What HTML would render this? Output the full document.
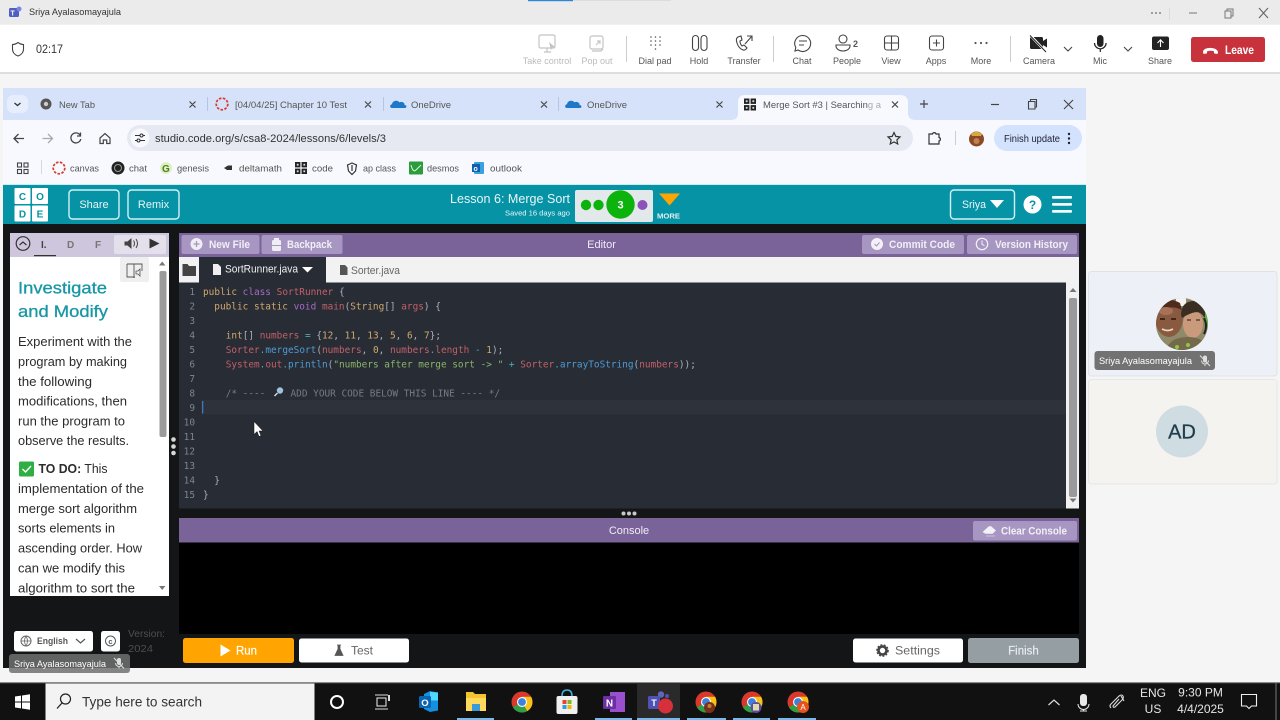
<!DOCTYPE html>
<html lang="en"><head><meta charset="utf-8"><title>Teams screen share</title>
<style>
html,body{margin:0;padding:0;background:#f5f5f5;overflow:hidden;width:1280px;height:720px}
svg{display:block;filter:blur(.35px)}
text{font-family:"Liberation Sans",sans-serif;white-space:pre}
.l{font-size:9px;fill:#555;text-anchor:middle}
.d{font-size:9px;fill:#bbb;text-anchor:middle}
.i{fill:none;stroke:#444;stroke-width:1.1}
.tb{font-size:9.5px;fill:#555}
.bk{font-size:9.5px;fill:#555}
.x{fill:none;stroke:#444;stroke-width:1.2}
.body{font-size:12.6px;fill:#2b2b2b}
.hb{font-size:11px;font-weight:bold;fill:#fff;fill-opacity:.85}
.code text{font-family:"DejaVu Sans Mono","Liberation Mono",monospace;font-size:9.42px;fill:#abb2bf}
.ln text{font-family:"DejaVu Sans Mono","Liberation Mono",monospace;font-size:9.42px;fill:#7d8590;text-anchor:end}
.k{fill:#cfa970}.p{fill:#a56bc4}.r{fill:#c2606a}.b{fill:#4f9bd6}.t{fill:#4fa8b5}.g{fill:#8cb56a}.n{fill:#cfa970}
.code text.c{fill:#767c86}
.tray{font-size:12px;fill:#e6e6e6;text-anchor:middle}
</style></head><body>
<svg width="1280" height="720" viewBox="0 0 1280 720" xmlns="http://www.w3.org/2000/svg">
<defs>
<g id="chrome"><circle r="10.5" fill="#d8392b"/><path d="M0 0L-9.1 5.25A10.5 10.5 0 0 0 5.25 9.1Z" fill="#2f9e44"/><path d="M0 0L5.25 9.1A10.5 10.5 0 0 0 9.1 -5.25L0 -5.25Z" fill="#f7c21a"/><circle r="5" fill="#fff"/><circle r="3.9" fill="#3b82e0"/></g>
<g id="od"><path d="M-7 4C-9.5 4-9.5 .5-7 .2C-6.5-3.5-1.5-4.5 .5-1.6C3-3 6-1 5.5 1C8 1 8 4 6 4Z" fill="#1d78c9"/></g>
<g id="codeic"><rect x="-6" y="-6" width="5.4" height="5.4" fill="#222"/><rect x=".6" y="-6" width="5.4" height="5.4" fill="#222"/><rect x="-6" y=".6" width="5.4" height="5.4" fill="#222"/><rect x=".6" y=".6" width="5.4" height="5.4" fill="#222"/><rect x="-4.2" y="-4.2" width="1.8" height="1.8" fill="#ddd"/><rect x="2.4" y="-4.2" width="1.8" height="1.8" fill="#ddd"/><rect x="-4.2" y="2.4" width="1.8" height="1.8" fill="#ddd"/><rect x="2.4" y="2.4" width="1.8" height="1.8" fill="#ddd"/></g>
<g id="canvas"><circle r="5.8" fill="none" stroke="#d5392c" stroke-width="1.7" stroke-dasharray="2.6 1.4"/></g>
<g id="micx"><rect x="-2" y="-5" width="4" height="7" rx="2" fill="#ddd"/><path d="M-3.5 0A3.5 3.5 0 0 0 3.5 0M0 3.5V5.5" fill="none" stroke="#ddd"/><path d="M-5-5L5 5.5" stroke="#ddd" stroke-width="1.1"/></g>
</defs>

<!-- desktop bg -->
<rect width="1280" height="720" fill="#f5f5f5"/>
<!-- teams title bar -->
<rect width="1280" height="24.5" fill="#ebebeb"/>
<rect x="528" width="45" height="1.2" fill="#2b88d8"/><rect x="573" width="98" height="1" fill="#dcdcdc"/>
<rect x="9" y="8" width="10" height="9" rx="1.5" fill="#4e5fbf"/><circle cx="19" cy="9" r="2.5" fill="#7b83eb"/><text x="10.5" y="15.5" font-size="7" font-weight="bold" fill="#fff">T</text>
<text x="29" y="15" font-size="9.5" fill="#333" textLength="92" lengthAdjust="spacingAndGlyphs">Sriya Ayalasomayajula</text>
<g fill="#666"><circle cx="1152" cy="13" r=".9"/><circle cx="1156" cy="13" r=".9"/><circle cx="1160" cy="13" r=".9"/></g>
<rect x="1169" y="8" width="1" height="12" fill="#ddd"/>
<path d="M1189 13H1197" stroke="#777"/><path d="M1225 11h6v7h-6zM1227 11v-2h6v7h-2" fill="none" stroke="#777"/><path d="M1259 8L1268 18M1268 8L1259 18" stroke="#666" stroke-width="1.1"/>

<!-- teams toolbar -->
<rect y="25" width="1280" height="47" fill="#fff"/>
<rect y="72" width="1280" height="2" fill="#dedede"/>
<path d="M18 42.500c2 1.500 3.500 2 5.500 2v4.500c0 3.500-2.500 6-5.500 7c-3-1-5.500-3.500-5.500-7v-4.500c2 0 3.500-.5 5.500-2z" fill="none" stroke="#444" stroke-width="1.1"/>
<text x="36" y="53" font-size="11.5" fill="#333" textLength="27" lengthAdjust="spacingAndGlyphs">02:17</text>

<g fill="none" stroke="#c4c4c4" stroke-width="1.2"><rect x="539" y="35" width="16" height="13" rx="1.500"/><path d="M544 52h7M547 48v4"/><rect x="590" y="36" width="13" height="13" rx="2"/><path d="M592 51h9l2-2M596 45l4-4M597 41h3v3"/></g><path d="M549 42l6 5-3 .5-1 3z" fill="#c4c4c4"/>
<text class="d" x="547" y="64">Take control</text><text class="d" x="597" y="64">Pop out</text>
<rect x="626" y="36" width="1" height="26" fill="#ccc"/>
<g fill="#555"><circle cx="651" cy="37" r=".8"/><circle cx="655.500" cy="37" r=".8"/><circle cx="660" cy="37" r=".8"/><circle cx="651" cy="41" r=".8"/><circle cx="655.500" cy="41" r=".8"/><circle cx="660" cy="41" r=".8"/><circle cx="651" cy="45" r=".8"/><circle cx="655.500" cy="45" r=".8"/><circle cx="660" cy="45" r=".8"/><circle cx="655.500" cy="49" r=".8"/></g>
<text class="l" x="655" y="64">Dial pad</text>
<g class="i"><rect x="692.500" y="35.500" width="6" height="15" rx="3"/><rect x="701" y="35.500" width="6" height="15" rx="3"/></g>
<text class="l" x="699" y="64">Hold</text>
<path class="i" d="M738 37c-2 1-2 3-1 6c1 3 3 6 6 7c2 .5 3-.5 4-2l-3-3l-2 1c-1-1-2-3-2-5l2-1l-1-4z"/><path class="i" d="M745 44l7-8M747 36h5v5"/>
<text class="l" x="744" y="64">Transfer</text>
<rect x="773" y="36" width="1" height="26" fill="#ccc"/>
<path class="i" d="M803 35.500a8 8 0 1 1-5 14.500l-3 1 .8-3.500a8 8 0 0 1 7.200-12zM799 41h8M799 45h5"/>
<text class="l" x="802" y="64">Chat</text>
<g class="i"><circle cx="843" cy="39" r="4"/><path d="M836 45h14v1a7 5 0 0 1-14 0z"/></g><text x="853" y="47" font-size="9" font-weight="bold" fill="#555">2</text>
<text class="l" x="847" y="64">People</text>
<g class="i"><rect x="884.500" y="36" width="14" height="14" rx="2.500"/><path d="M891.500 36v14M884.500 43h14"/></g>
<text class="l" x="891" y="64">View</text>
<g class="i"><rect x="929.500" y="36" width="14" height="14" rx="2.500"/><path d="M936.500 39.500v7M933 43h7"/></g>
<text class="l" x="936" y="64">Apps</text>
<g fill="#555"><circle cx="975.500" cy="43" r="1.100"/><circle cx="981" cy="43" r="1.100"/><circle cx="986.500" cy="43" r="1.100"/></g>
<text class="l" x="981" y="64">More</text>
<rect x="1010" y="36" width="1" height="26" fill="#ccc"/>
<rect x="1030" y="37" width="13" height="12" rx="1.500" fill="#222"/><path d="M1043 41l4-2.500v9l-4-2.500z" fill="#222"/><path d="M1030 35L1046 52" stroke="#fff" stroke-width="2.500"/><path d="M1030 35.500L1046 52" stroke="#222" stroke-width="1"/>
<text class="l" x="1039" y="64" fill="#333">Camera</text>
<path class="i" d="M1064 47l4 4 4-4M1124 47l4 4 4-4" stroke="#666"/>
<rect x="1097" y="35" width="6.500" height="12" rx="3.250" fill="#222"/><path d="M1094.500 43a5.800 5.800 0 0 0 11.600 0M1100.300 49v3" fill="none" stroke="#222" stroke-width="1.200"/>
<text class="l" x="1100" y="64">Mic</text>
<rect x="1152" y="36.500" width="17" height="13.500" rx="2" fill="#222"/><path d="M1160.500 47v-7M1157.500 43l3-3.200 3 3.200" stroke="#fff" fill="none" stroke-width="1.100"/>
<text class="l" x="1160" y="64">Share</text>
<rect x="1191" y="37" width="74" height="25" rx="2.500" fill="#c8323c"/>
<path d="M1203 52c0-5.500 14-5.500 15 0l-.5 2-3.500-.6v-2c-2.500-.9-4.500-.9-7 0v2l-3.500.6z" fill="#fff"/>
<text x="1225" y="54" font-size="11.500" font-weight="bold" fill="#fff" textLength="29" lengthAdjust="spacingAndGlyphs">Leave</text>

<!-- chrome window -->
<rect x="3" y="88" width="1083" height="32" fill="#d6e2f9"/>
<rect x="3" y="120" width="1083" height="64" fill="#f8f9ff"/>
<rect x="7" y="95" width="21" height="18" rx="6" fill="#e6edfc"/><path d="M14.500 103l3 2.500 3-2.500" fill="none" stroke="#333" stroke-width="1.300"/>
<circle cx="46" cy="104" r="5.500" fill="#555"/><circle cx="46" cy="104" r="2.200" fill="#ccc"/>
<text class="tb" x="59" y="108" textLength="36" lengthAdjust="spacingAndGlyphs">New Tab</text>
<path class="x" d="M189.500 101.500l6 6M195.500 101.500l-6 6M365 101.500l6 6M371 101.500l-6 6M541 101.500l6 6M547 101.500l-6 6M716.500 101.500l6 6M722.500 101.500l-6 6"/>
<rect x="207" y="97" width="1" height="14" fill="#b4c4e2"/><rect x="383" y="97" width="1" height="14" fill="#b4c4e2"/><rect x="558" y="97" width="1" height="14" fill="#b4c4e2"/>
<use href="#canvas" x="222" y="104"/>
<text class="tb" x="235" y="108" textLength="112" lengthAdjust="spacingAndGlyphs">[04/04/25] Chapter 10 Test</text>
<use href="#od" x="399" y="104"/><text class="tb" x="411" y="108" textLength="40" lengthAdjust="spacingAndGlyphs">OneDrive</text>
<use href="#od" x="574" y="104"/><text class="tb" x="587" y="108" textLength="40" lengthAdjust="spacingAndGlyphs">OneDrive</text>
<path d="M730 120c6 0 8-2 8-7v-11c0-5 3-7 7-7h155c4 0 8 2 8 7v11c0 5 3 7 8 7z" fill="#f8f9ff"/>
<use href="#codeic" x="750" y="104.500"/>
<text class="tb" x="763" y="108" textLength="118" lengthAdjust="spacingAndGlyphs" fill="#444">Merge Sort #3 | Searching a</text>
<rect x="868" y="96" width="14" height="16" fill="#f8f9ff" fill-opacity=".5"/>
<path d="M892 101.500l6 6M898 101.500l-6 6" class="x" stroke="#222"/>
<path d="M924 100v8M920 104h8" stroke="#444" stroke-width="1.200"/>
<path d="M991 104.500h8" stroke="#444" stroke-width="1.200"/>
<path d="M1028.500 101.500h6.500v7.500h-6.500zM1030.500 101.500v-2h6v7.500h-1.500" fill="none" stroke="#444" stroke-width="1.100"/>
<path d="M1064 100l9 9M1073 100l-9 9" stroke="#444" stroke-width="1.100"/>

<path d="M24 138.500H14.500M18.500 134l-4.500 4.500 4.500 4.500" fill="none" stroke="#444" stroke-width="1.300"/>
<path d="M42.500 138.500H52M48 134l4.500 4.500-4.500 4.500" fill="none" stroke="#aaa" stroke-width="1.300"/>
<path d="M80 135a5 5 0 1 0 .8 4M80.500 132.500v3.500H77" fill="none" stroke="#444" stroke-width="1.300"/>
<path d="M100 138l5-4.500 5 4.500v5.500h-3.300v-3.500h-3.400v3.500H100z" fill="none" stroke="#444" stroke-width="1.200"/>
<rect x="127" y="125" width="786" height="26" rx="13" fill="#e6e9f2"/>
<circle cx="140" cy="138" r="9.500" fill="#f8f9ff"/>
<path d="M135 135.500h5M143 135.500h2M135 140.500h2M140 140.500h5" stroke="#333"/><circle cx="141.500" cy="135.500" r="1.500" fill="none" stroke="#333"/><circle cx="138.500" cy="140.500" r="1.500" fill="none" stroke="#333"/>
<text x="155" y="142" font-size="11" fill="#333" textLength="231" lengthAdjust="spacingAndGlyphs">studio.code.org/s/csa8-2024/lessons/6/levels/3</text>
<path d="M894 132.500l1.800 3.900 4.200.5-3.100 2.900.8 4.200-3.700-2.100-3.700 2.100.8-4.200-3.100-2.900 4.200-.5z" fill="none" stroke="#333" stroke-width="1.200"/>
<path d="M929 134h3.500a1.800 1.800 0 0 1 3.500 0h3v3.500a1.800 1.800 0 0 1 0 3.500v3h-10z" fill="none" stroke="#333" stroke-width="1.200"/>
<rect x="955" y="131" width="1" height="14" fill="#ccd"/>
<circle cx="976.500" cy="139" r="7.500" fill="#8a4a28"/><path d="M971 134c3-3 8-3 11 0l-1 2h-9z" fill="#d8a840"/><circle cx="976.500" cy="141" r="3" fill="#c08050"/>
<rect x="994" y="125" width="88" height="26" rx="13" fill="#d3e3fd"/>
<text x="1004" y="142" font-size="10" fill="#223" textLength="56" lengthAdjust="spacingAndGlyphs">Finish update</text>
<g fill="#223"><circle cx="1069" cy="134" r="1.200"/><circle cx="1069" cy="138.500" r="1.200"/><circle cx="1069" cy="143" r="1.200"/></g>

<!-- bookmarks -->
<g fill="none" stroke="#444" stroke-width="1.100"><rect x="17.500" y="163" width="4" height="4"/><rect x="24" y="163" width="4" height="4"/><rect x="17.500" y="169.500" width="4" height="4"/><rect x="24" y="169.500" width="4" height="4"/></g>
<rect x="41" y="160" width="1" height="14" fill="#d4d8e4"/>
<use href="#canvas" x="59" y="168"/><text class="bk" x="70" y="171.500" textLength="29" lengthAdjust="spacingAndGlyphs">canvas</text>
<circle cx="118" cy="168" r="6.500" fill="#222"/><circle cx="118" cy="168" r="3.500" fill="none" stroke="#999"/><text class="bk" x="129" y="171.500" textLength="18" lengthAdjust="spacingAndGlyphs">chat</text>
<circle cx="166" cy="168" r="6" fill="#dff0c0"/><text x="162" y="172" font-size="10" font-weight="bold" fill="#4a7d2a">G</text><text class="bk" x="177" y="171.500" textLength="32" lengthAdjust="spacingAndGlyphs">genesis</text>
<path d="M224 168l4-2.500h4v4.500h-5z" fill="#333"/><text class="bk" x="239" y="171.500" textLength="43" lengthAdjust="spacingAndGlyphs">deltamath</text>
<use href="#codeic" x="301" y="168"/><text class="bk" x="312" y="171.500" textLength="21" lengthAdjust="spacingAndGlyphs">code</text>
<path d="M347.500 165l4.500-2 4.500 2-1 6-3.500 3.500-3.500-3.500zM352 165v6" fill="none" stroke="#333" stroke-width="1.200"/><text class="bk" x="363" y="171.500" textLength="33" lengthAdjust="spacingAndGlyphs">ap class</text>
<rect x="409" y="161.500" width="14" height="13" rx="1" fill="#2a9d3a"/><path d="M411 165q2 8 5 5t5-5" fill="none" stroke="#dff5df"/><text class="bk" x="427" y="171.500" textLength="32" lengthAdjust="spacingAndGlyphs">desmos</text>
<rect x="474" y="162" width="10" height="12" rx="1" fill="#3aa0e0"/><rect x="472" y="164" width="8" height="8" fill="#0f5fb0"/><text x="473.500" y="171" font-size="7" font-weight="bold" fill="#fff">o</text><text class="bk" x="490" y="171.500" textLength="32" lengthAdjust="spacingAndGlyphs">outlook</text>

<!-- code.org header -->
<rect x="3" y="184" width="1083" height="484" fill="#131517"/>
<rect x="3" y="184" width="1083" height="40" fill="#0793a6"/>
<rect x="3" y="184" width="1083" height="1" fill="#cfeaf0"/>
<g fill="#fff"><rect x="14.500" y="188" width="16" height="16" rx="1"/><rect x="32" y="188" width="16" height="16" rx="1"/><rect x="14.500" y="205.500" width="16" height="16" rx="1"/><rect x="32" y="205.500" width="16" height="16" rx="1"/></g>
<g font-size="10" font-weight="bold" fill="#0793a6" text-anchor="middle"><text x="22.500" y="200">C</text><text x="40" y="200">O</text><text x="22.500" y="217.500">D</text><text x="40" y="217.500">E</text></g>
<g fill="none" stroke="#d4f0f4" stroke-width="1.400"><rect x="69" y="190" width="50" height="29" rx="3.500"/><rect x="128" y="190" width="51" height="29" rx="3.500"/><rect x="950.500" y="190" width="64" height="29" rx="3.500"/></g>
<text x="94" y="208" font-size="11" fill="#e6f6f8" text-anchor="middle">Share</text><text x="153.500" y="208" font-size="11" fill="#e6f6f8" text-anchor="middle">Remix</text>
<text x="450" y="203" font-size="12.500" fill="#e8f6f8" textLength="120" lengthAdjust="spacingAndGlyphs">Lesson 6: Merge Sort</text>
<text x="505" y="215.500" font-size="7.500" fill="#e8f6f8" textLength="65" lengthAdjust="spacingAndGlyphs">Saved 16 days ago</text>
<rect x="575" y="190" width="78" height="32" rx="2" fill="#e3e8ea"/>
<circle cx="586" cy="205" r="5.200" fill="#0db30d"/><circle cx="598.500" cy="205" r="5.200" fill="#0db30d"/><circle cx="620.500" cy="204.500" r="14.200" fill="#0db30d"/><circle cx="642.500" cy="205" r="5" fill="#8c52ba"/>
<text x="620.500" y="208.500" font-size="11" font-weight="bold" fill="#fff" text-anchor="middle">3</text>
<path d="M659 193.500h21l-10.500 12z" fill="#ffa400"/>
<text x="657" y="218.500" font-size="7.500" font-weight="bold" fill="#dff2f5" textLength="23" lengthAdjust="spacingAndGlyphs">MORE</text>
<text x="962" y="208" font-size="11" fill="#e8f6f8" textLength="24" lengthAdjust="spacingAndGlyphs">Sriya</text>
<path d="M990 200h14l-7 8z" fill="#fff"/>
<circle cx="1032.500" cy="204.500" r="9" fill="#fff"/><text x="1032.500" y="209" font-size="12" font-weight="bold" fill="#0793a6" text-anchor="middle">?</text>
<g fill="#f4fbfc"><rect x="1052" y="196" width="20" height="2.800" rx="1"/><rect x="1052" y="203" width="20" height="2.800" rx="1"/><rect x="1052" y="210" width="20" height="2.800" rx="1"/></g>

<!-- instructions -->
<rect x="10" y="233" width="159" height="363" fill="#fff"/>
<rect x="10" y="233" width="159" height="24" fill="#cdc6dd"/>
<circle cx="23" cy="243.500" r="6.800" fill="none" stroke="#333" stroke-width="1.200"/><path d="M19.500 245l3.500-3 3.500 3" fill="none" stroke="#333" stroke-width="1.200"/>
<text x="41" y="248" font-size="10" font-weight="bold" fill="#444">I.</text><rect x="34" y="255" width="22" height="1.200" fill="#333"/>
<text x="67" y="248" font-size="10" font-weight="bold" fill="#777">D</text><text x="95" y="248" font-size="10" font-weight="bold" fill="#777">F</text>
<rect x="114" y="235" width="52" height="19" rx="2" fill="#e3dfeb"/>
<path d="M124.500 241.500h3l4-3.500v11l-4-3.500h-3z" fill="#444"/><path d="M133.500 240.500q2 3 0 6M136 239q3 4.500 0 9" fill="none" stroke="#444"/>
<path d="M149.500 238.500l10 5-10 5z" fill="#333"/>
<rect x="120" y="257" width="29" height="25" rx="2" fill="#efefef"/>
<path d="M127 264h15v7M127 264v13h8M134 264v14" fill="none" stroke="#555" stroke-width=".9"/><path d="M136 271h2l2-2v7l-2-2h-2z" fill="none" stroke="#555" stroke-width=".8"/>
<path d="M159 265.500l3.200-4 3.200 4z" fill="#777"/><rect x="159.500" y="271" width="7" height="166" rx="2" fill="#9b9b9b"/><path d="M159 586l3.200 4 3.200-4z" fill="#777"/>
<text x="18" y="293.500" font-size="16.500" fill="#1797a6" stroke="#1797a6" stroke-width=".3" textLength="89" lengthAdjust="spacingAndGlyphs">Investigate</text>
<text x="18" y="317" font-size="16.500" fill="#1797a6" stroke="#1797a6" stroke-width=".3" textLength="90" lengthAdjust="spacingAndGlyphs">and Modify</text>
<g class="body">
<text x="18" y="346" textLength="114" lengthAdjust="spacingAndGlyphs">Experiment with the</text>
<text x="18" y="366" textLength="109" lengthAdjust="spacingAndGlyphs">program by making</text>
<text x="18" y="386" textLength="74" lengthAdjust="spacingAndGlyphs">the following</text>
<text x="18" y="405.500" textLength="109" lengthAdjust="spacingAndGlyphs">modifications, then</text>
<text x="18" y="425.500" textLength="107" lengthAdjust="spacingAndGlyphs">run the program to</text>
<text x="18" y="445" textLength="111" lengthAdjust="spacingAndGlyphs">observe the results.</text>
<text x="38.500" y="473" textLength="69" lengthAdjust="spacingAndGlyphs"><tspan font-weight="bold">TO DO:</tspan> This</text>
<text x="18" y="493" textLength="126" lengthAdjust="spacingAndGlyphs">implementation of the</text>
<text x="18" y="513" textLength="119" lengthAdjust="spacingAndGlyphs">merge sort algorithm</text>
<text x="18" y="532.500" textLength="97" lengthAdjust="spacingAndGlyphs">sorts elements in</text>
<text x="18" y="552.500" textLength="124" lengthAdjust="spacingAndGlyphs">ascending order. How</text>
<text x="18" y="572.500" textLength="107" lengthAdjust="spacingAndGlyphs">can we modify this</text>
<text x="18" y="592.500" textLength="117" lengthAdjust="spacingAndGlyphs">algorithm to sort the</text>
</g>
<rect x="10" y="596" width="159" height="6" fill="#131517"/>
<rect x="19" y="461.500" width="15" height="15" rx="1.500" fill="#2fae44"/><path d="M22.500 469l3 3 5.500-6" fill="none" stroke="#fff" stroke-width="1.400"/>
<g fill="#d8d8d8"><circle cx="173.500" cy="439.500" r="2.300"/><circle cx="173.500" cy="446.500" r="2.300"/><circle cx="173.500" cy="453" r="2.300"/></g>

<!-- editor -->
<rect x="179" y="233" width="900" height="24" fill="#7a6399"/>
<g fill="#a795c2"><rect x="181.500" y="235" width="78" height="19" rx="2"/><rect x="261.500" y="235" width="81" height="19" rx="2"/><rect x="862" y="235" width="102" height="19" rx="2"/><rect x="967" y="235" width="110" height="19" rx="2"/></g>
<circle cx="196.500" cy="244" r="6" fill="#f0edf5"/><path d="M193.500 244h6M196.500 241v6" stroke="#a795c2" stroke-width="1.300"/>
<text class="hb" x="209" y="248" textLength="41" lengthAdjust="spacingAndGlyphs">New File</text>
<rect x="272" y="240" width="9" height="11" rx="1.500" fill="#f0edf5"/><rect x="274" y="238" width="5" height="2.500" fill="#f0edf5"/><rect x="272" y="245" width="9" height="1" fill="#a795c2"/>
<text class="hb" x="287" y="248" textLength="45" lengthAdjust="spacingAndGlyphs">Backpack</text>
<text x="601.500" y="248" font-size="11" fill="#efeaf5" text-anchor="middle">Editor</text>
<circle cx="877" cy="244" r="6" fill="#f3f1f7"/><path d="M874.500 244l2 2 3-3.500" fill="none" stroke="#a795c2" stroke-width="1.100"/>
<text class="hb" x="889" y="248" textLength="66" lengthAdjust="spacingAndGlyphs">Commit Code</text>
<circle cx="982" cy="244" r="5.700" fill="none" stroke="#f3f1f7" stroke-width="1.200"/><path d="M982 240.500v3.700l2.500 1.500" fill="none" stroke="#f3f1f7"/>
<text class="hb" x="995" y="248" textLength="73" lengthAdjust="spacingAndGlyphs">Version History</text>

<rect x="179" y="257" width="900" height="25.500" fill="#f2f2f2"/>
<rect x="199" y="257" width="127" height="25.500" fill="#282c34"/>
<path d="M182.500 264h5l1.500 2h7v10h-13.500z" fill="#444"/>
<path d="M213 264h5l3 3v8h-8z" fill="#eee"/>
<text x="225" y="272.500" font-size="11" fill="#f0f0f0" textLength="73" lengthAdjust="spacingAndGlyphs">SortRunner.java</text>
<path d="M302 267h11l-5.500 5.500z" fill="#fff"/>
<path d="M340 265h5l2.500 2.500v7.500h-7.500z" fill="#555"/>
<text x="351" y="274" font-size="11" fill="#666" textLength="49" lengthAdjust="spacingAndGlyphs">Sorter.java</text>

<rect x="179" y="282.500" width="887" height="226" fill="#282c34"/>
<rect x="1066" y="282.500" width="13" height="226" fill="#f1f1f1"/>
<path d="M1069.500 292l3.500-4 3.500 4z" fill="#777"/><rect x="1069" y="298" width="8" height="199" rx="2" fill="#9a9a9a"/><path d="M1069.500 498.500l3.500 4 3.500-4z" fill="#777"/>
<rect x="201" y="400" width="865" height="14.500" fill="#2d323b"/>
<rect x="202" y="401" width="1.300" height="12.500" fill="#3d79c4"/>

<g class="ln"><text x="195" y="294.800">1</text><text x="195" y="309.300">2</text><text x="195" y="323.800">3</text><text x="195" y="338.300">4</text><text x="195" y="352.800">5</text><text x="195" y="367.300">6</text><text x="195" y="381.800">7</text><text x="195" y="396.300">8</text><text x="195" y="410.800">9</text><text x="195" y="425.300">10</text><text x="195" y="439.800">11</text><text x="195" y="454.300">12</text><text x="195" y="468.800">13</text><text x="195" y="483.300">14</text><text x="195" y="497.800">15</text></g>
<g class="code">
<text x="203" y="294.800"><tspan class="k">public</tspan> <tspan class="p">class</tspan> <tspan class="r">SortRunner</tspan> {</text>
<text x="214.300" y="309.300"><tspan class="k">public</tspan> <tspan class="k">static</tspan> <tspan class="p">void</tspan> <tspan class="r">main</tspan>(<tspan class="k">String</tspan>[] <tspan class="r">args</tspan>) {</text>
<text x="225.700" y="338.300"><tspan class="k">int</tspan>[] <tspan class="r">numbers</tspan> <tspan class="t">=</tspan> {<tspan class="n">12</tspan>, <tspan class="n">11</tspan>, <tspan class="n">13</tspan>, <tspan class="n">5</tspan>, <tspan class="n">6</tspan>, <tspan class="n">7</tspan>};</text>
<text x="225.700" y="352.800"><tspan class="r">Sorter</tspan><tspan class="t">.</tspan><tspan class="b">mergeSort</tspan>(<tspan class="r">numbers</tspan>, <tspan class="n">0</tspan>, <tspan class="r">numbers</tspan><tspan class="t">.</tspan><tspan class="r">length</tspan> <tspan class="t">-</tspan> <tspan class="n">1</tspan>);</text>
<text x="225.700" y="367.300"><tspan class="r">System</tspan><tspan class="t">.</tspan><tspan class="r">out</tspan><tspan class="t">.</tspan><tspan class="b">println</tspan>(<tspan class="g">"numbers after merge sort -&gt; "</tspan> <tspan class="t">+</tspan> <tspan class="r">Sorter</tspan><tspan class="t">.</tspan><tspan class="b">arrayToString</tspan>(<tspan class="r">numbers</tspan>));</text>
<text x="225.700" y="396.300" class="c">/* ----</text>
<text x="290.500" y="396.300" class="c">ADD YOUR CODE BELOW THIS LINE ---- */</text>
<text x="214.300" y="483.300">}</text>
<text x="203" y="497.800">}</text>
</g>
<circle cx="280" cy="390.500" r="3.200" fill="#9cc4dc"/><path d="M277.500 393l-3 3" stroke="#ddd" stroke-width="1.300"/>
<path d="M254 421.500v13l3-3 2 5 2-1-2-4.500h4z" fill="#fff" stroke="#111" stroke-width=".5"/>

<g fill="#c8c8c8"><circle cx="623.500" cy="513.500" r="2"/><circle cx="629" cy="513.500" r="2"/><circle cx="634.500" cy="513.500" r="2"/></g>

<!-- console -->
<rect x="179" y="518" width="900" height="24.500" fill="#7a6399"/>
<rect x="179" y="542.500" width="900" height="91.500" fill="#000"/>
<text x="629" y="534" font-size="11" fill="#f0ecf5" text-anchor="middle">Console</text>
<rect x="973" y="521" width="104" height="19.500" rx="2" fill="#a795c2"/>
<path d="M983 532l6-5.500h2l4.500 4-3 3h-7zM986 536h9" fill="#f3f1f7" stroke="#f3f1f7" stroke-width=".6"/>
<text class="hb" x="1001" y="534.500" textLength="66" lengthAdjust="spacingAndGlyphs">Clear Console</text>

<!-- footer buttons -->
<rect x="183" y="638" width="111" height="25" rx="2.500" fill="#ffa400"/>
<path d="M220.500 644.500l10 6-10 6z" fill="#fff"/>
<text x="236" y="654.500" font-size="11.500" fill="#fff" stroke="#fff" stroke-width=".2" textLength="21" lengthAdjust="spacingAndGlyphs">Run</text>
<rect x="299" y="638.500" width="110" height="24" rx="2.500" fill="#fff"/>
<path d="M337 645h4M338 645v4l-3 6.500h8l-3-6.500v-4z" fill="#555" stroke="#555" stroke-width=".8"/>
<text x="351" y="654.500" font-size="11.500" fill="#666" textLength="22" lengthAdjust="spacingAndGlyphs">Test</text>
<rect x="853" y="638.500" width="110" height="24" rx="2.500" fill="#fff"/>
<circle cx="882.500" cy="650.500" r="4" fill="none" stroke="#444" stroke-width="2.600"/><circle cx="882.500" cy="650.500" r="5.700" fill="none" stroke="#444" stroke-width="1.200" stroke-dasharray="2 1.500"/>
<text x="895" y="654.500" font-size="11.500" fill="#666" textLength="45" lengthAdjust="spacingAndGlyphs">Settings</text>
<rect x="968" y="638" width="111" height="25" rx="2.500" fill="#949ea3"/>
<text x="1023.500" y="654.500" font-size="11.500" fill="#e8ecee" stroke="#e8ecee" stroke-width=".2" text-anchor="middle">Finish</text>

<!-- language -->
<rect x="14" y="631" width="79" height="20.500" rx="2.500" fill="#fff"/>
<circle cx="26" cy="641" r="5" fill="none" stroke="#666"/><path d="M21 641h10M26 636q-3 5 0 10M26 636q3 5 0 10" fill="none" stroke="#666" stroke-width=".8"/>
<text x="37" y="644" font-size="9.500" font-weight="bold" fill="#555" textLength="31" lengthAdjust="spacingAndGlyphs">English</text>
<path d="M76 639l4.500 4 4.500-4" fill="none" stroke="#555" stroke-width="1.200"/>
<rect x="101" y="631" width="19" height="20.500" rx="2.500" fill="#fff"/><circle cx="110.500" cy="641" r="5" fill="none" stroke="#555"/><text x="110.500" y="644" font-size="7.500" font-weight="bold" fill="#555" text-anchor="middle">c</text>
<text x="128" y="637" font-size="10.500" fill="#4c4f52" textLength="37" lengthAdjust="spacingAndGlyphs">Version:</text>
<text x="128" y="652" font-size="10.500" fill="#4c4f52" textLength="25" lengthAdjust="spacingAndGlyphs">2024</text>

<rect x="9" y="654" width="121" height="19" rx="3" fill="#707070" fill-opacity=".85"/>
<text x="14" y="667" font-size="9.500" fill="#fff" textLength="92" lengthAdjust="spacingAndGlyphs">Sriya Ayalasomayajula</text>
<use href="#micx" x="119" y="663"/>

<!-- side tiles -->
<rect x="1088.500" y="271.500" width="188.500" height="104.500" rx="3" fill="#edf0f7" stroke="#e2e2e6"/>
<rect x="1088.500" y="379.500" width="188.500" height="104.500" rx="3" fill="#f5f3ef" stroke="#e6e6e6"/>
<clipPath id="av"><circle cx="1182" cy="324" r="26"/></clipPath>
<g clip-path="url(#av)">
<rect x="1156" y="298" width="52" height="52" fill="#8f8a6a"/>
<rect x="1176" y="298" width="10" height="8" fill="#f4f4f4"/>
<ellipse cx="1169" cy="318" rx="14" ry="19" fill="#8a5a40"/>
<path d="M1156 306q12-10 24-3l2 7q-12-6-26 2z" fill="#4f2b1e"/>
<ellipse cx="1166" cy="311" rx="7" ry="4" fill="#a87258"/>
<path d="M1160 319h5M1171 319h5" stroke="#2a1510" stroke-width="1.500"/>
<path d="M1162 329q6 3 11 0" stroke="#e8d8c8" stroke-width="1.800" fill="none"/>
<ellipse cx="1193" cy="324" rx="10" ry="14" fill="#c99b7c"/>
<path d="M1181 316q0-15 13-15t14 15l-4 1q-4-7-12-4t-9 5z" fill="#3a2d22"/>
<path d="M1187 320h4M1196 320h4" stroke="#4a3020" stroke-width="1.200"/>
<rect x="1205" y="312" width="3" height="14" fill="#60b040"/>
<path d="M1166 350q4-13 22-13t18 13z" fill="#74694a"/>
<circle cx="1188" cy="345" r="2" fill="#8cc840"/><circle cx="1177" cy="347" r="2" fill="#8cc840"/>
<path d="M1204 318q4 8 0 16" stroke="#222" stroke-width="2" fill="none"/>
</g>
<rect x="1094.500" y="351" width="120.500" height="19" rx="3" fill="#727272"/>
<text x="1099" y="364" font-size="9.500" fill="#fff" textLength="93" lengthAdjust="spacingAndGlyphs">Sriya Ayalasomayajula</text>
<use href="#micx" x="1205" y="360.500"/>
<circle cx="1182" cy="431.500" r="26" fill="#cfdde3"/>
<text x="1182" y="438.500" font-size="20" fill="#1f3d4d" stroke="#1f3d4d" stroke-width=".3" text-anchor="middle">AD</text>

<!-- taskbar -->
<rect y="682" width="1280" height="38" fill="#111"/>
<rect y="682" width="1280" height="1.200" fill="#8a8a8a"/>
<g fill="#fff"><path d="M15 696.500l6-.9v5.900h-6zM22 695.500l8-1.200v7.200h-8zM15 702.500h6v5.900l-6-.9zM22 702.500h8v7.200l-8-1.200z"/></g>
<rect x="45.500" y="683.500" width="269" height="36.500" fill="#f3f3f3"/>
<circle cx="65.500" cy="699" r="5" fill="none" stroke="#222" stroke-width="1.200"/><path d="M62 703l-5 5.500" stroke="#222" stroke-width="1.300"/>
<text x="82" y="706.500" font-size="14" fill="#333" textLength="120" lengthAdjust="spacingAndGlyphs">Type here to search</text>
<circle cx="337" cy="702" r="6" fill="none" stroke="#fff" stroke-width="2"/>
<g fill="none" stroke="#ddd" stroke-width="1.100"><rect x="377" y="698" width="9" height="8"/><path d="M375 695h13M375 709h13"/></g><rect x="388" y="695" width="2" height="6" fill="#ddd"/>
<path d="M424 694l6-3 8 1.500v18l-8 1.500-6-3z" fill="#1490df"/><path d="M430 692l8 .5v8h-8z" fill="#50d9ff"/><rect x="419" y="696" width="12" height="12" rx="1.500" fill="#0a64b4"/><text x="425" y="706" font-size="9.500" font-weight="bold" fill="#fff" text-anchor="middle">O</text>
<path d="M466 692h7l2 2h11v17h-20z" fill="#f4c430"/><rect x="466" y="698" width="20" height="13" fill="#ffd95c"/><rect x="472" y="704" width="8" height="7" fill="#3a9ad9"/>
<use href="#chrome" x="522" y="702"/>
<rect x="556.500" y="696" width="21" height="18" rx="2" fill="#f0f0f0"/><path d="M562 696q0-6 5-6t5 6" fill="none" stroke="#40b0e0" stroke-width="1.500"/><rect x="562.500" y="700" width="4" height="4" fill="#e8432e"/><rect x="567.500" y="700" width="4" height="4" fill="#7cb82f"/><rect x="562.500" y="705" width="4" height="4" fill="#2a9fe0"/><rect x="567.500" y="705" width="4" height="4" fill="#f4b400"/>
<path d="M610 692h15v20h-15z" fill="#9a4fcf"/><rect x="603" y="696" width="13" height="13" rx="1" fill="#6b2fa3"/><text x="609.500" y="706.500" font-size="10" font-weight="bold" fill="#fff" text-anchor="middle">N</text>
<rect x="637" y="683" width="43" height="37" fill="#2a2a2a"/>
<circle cx="661" cy="694.500" r="3.200" fill="#6264b8"/><circle cx="667" cy="696" r="2" fill="#5153a8"/><rect x="648" y="696" width="12" height="13" rx="1.500" fill="#4e52b5"/><text x="654" y="706" font-size="9" font-weight="bold" fill="#fff" text-anchor="middle">T</text>
<circle cx="665.500" cy="706" r="7.500" fill="#d6303a"/>
<use href="#chrome" x="706" y="702"/><circle cx="709.500" cy="707.500" r="5.500" fill="#7a3018"/><circle cx="709.500" cy="706" r="2" fill="#c08040"/>
<use href="#chrome" x="752" y="702"/><circle cx="756" cy="707.500" r="5.500" fill="#5a4f9f"/><rect x="753" y="704" width="6" height="6.500" fill="#e0d8b0"/>
<use href="#chrome" x="798" y="702"/><circle cx="803" cy="707" r="6" fill="#e8501c"/><text x="803" y="710" font-size="8" fill="#fff" text-anchor="middle">A</text>
<g fill="#76b9ed"><rect x="457" y="718" width="37" height="2"/><rect x="595" y="718" width="37" height="2"/><rect x="637" y="718" width="43" height="2"/><rect x="687" y="718" width="39" height="2"/><rect x="733" y="718" width="37" height="2"/><rect x="778" y="718" width="38" height="2"/></g>

<path d="M1048.500 705l5.500-5 5.500 5" fill="none" stroke="#ddd" stroke-width="1.200"/>
<rect x="1080" y="694" width="7" height="12" rx="3" fill="#e8e8e8"/><path d="M1078 704a5.500 5.500 0 0 0 11 0M1083.500 709.500v2M1080 711h7" fill="none" stroke="#e8e8e8"/>
<path d="M1111 708q-2-2 0-4l8-8q3-2 4 0t-1 4l-7 7q-2 1-2-1l6-7M1121 696l3 5" fill="none" stroke="#ddd" stroke-width="1.100"/>
<text class="tray" x="1153" y="697">ENG</text><text class="tray" x="1153" y="713">US</text>
<text class="tray" x="1200.500" y="696.500">9:30 PM</text><text class="tray" x="1200.500" y="713">4/4/2025</text>
<path d="M1241.500 694.500h15v11.500h-5l-2.500 2.500-2.500-2.500h-5z" fill="none" stroke="#eee" stroke-width="1.100"/>
<rect x="1275.500" y="683" width="1" height="37" fill="#777"/>
</svg>
</body></html>
